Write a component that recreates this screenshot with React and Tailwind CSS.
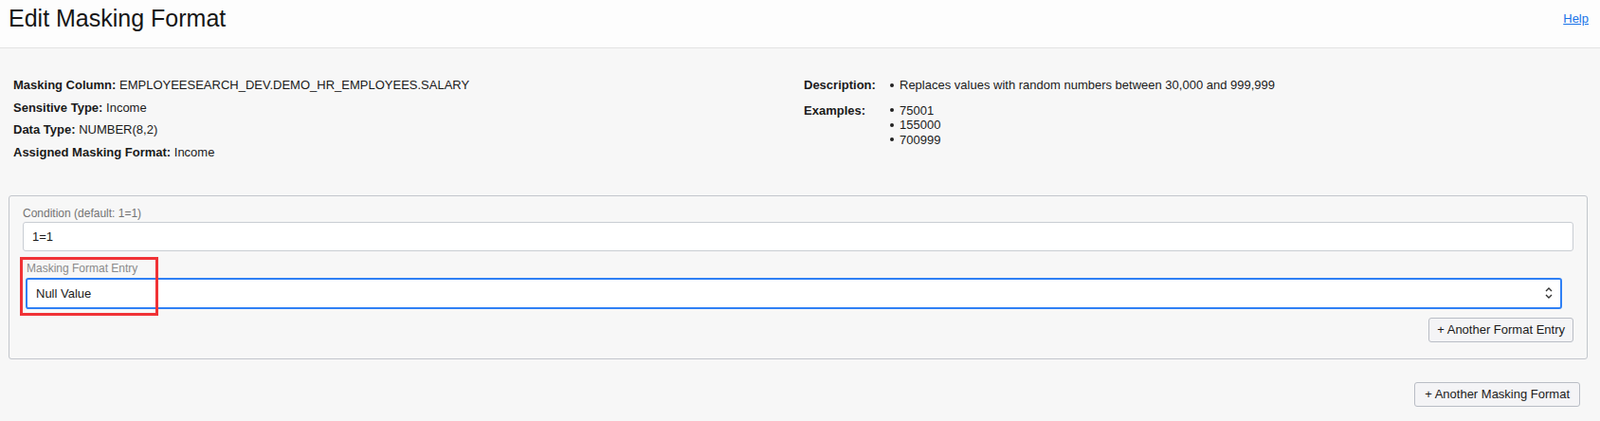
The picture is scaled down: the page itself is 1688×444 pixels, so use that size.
import { useState } from "react";

const font = { fontFamily: '"Liberation Sans", Arial, sans-serif' };

function InfoRow({ label, value }) {
  return (
    <div className="h-[23.5px] leading-[23.5px]">
      <span className="font-bold">{label}:</span> {value}
    </div>
  );
}

function Bullet({ children }) {
  return (
    <li className="flex items-center">
      <span className="mr-[6px] inline-block h-[4px] w-[4px] rounded-full bg-[#222]" />
      {children}
    </li>
  );
}

function SelectArrows() {
  return (
    <svg width="10" height="16" viewBox="0 0 10 16" className="text-[#333]">
      <path d="M2 6 L5 3 L8 6" fill="none" stroke="currentColor" strokeWidth="1.4" />
      <path d="M2 10 L5 13 L8 10" fill="none" stroke="currentColor" strokeWidth="1.4" />
    </svg>
  );
}

export default function App() {
  const [condition, setCondition] = useState("1=1");
  const [entry, setEntry] = useState("Null Value");

  return (
    <div className="min-h-[444px] bg-[#f7f7f7] text-[13px] text-[#1a1a1a]" style={font}>
      <div className="flex h-[51px] items-start justify-between border-b border-[#e3e3e3] bg-[#fdfdfd] pl-[9px] pr-[12px]">
        <h1 className="mt-[4px] text-[25px] leading-[30px] text-[#161616]">Edit Masking Format</h1>
        <a href="#" className="mt-[10px] text-[13px] text-[#1a73e8] underline">
          Help
        </a>
      </div>

      <div className="grid grid-cols-2 gap-[4px] px-[14px] pt-[27px]">
        <div>
          <InfoRow label="Masking Column" value="EMPLOYEESEARCH_DEV.DEMO_HR_EMPLOYEES.SALARY" />
          <InfoRow label="Sensitive Type" value="Income" />
          <InfoRow label="Data Type" value="NUMBER(8,2)" />
          <InfoRow label="Assigned Masking Format" value="Income" />
        </div>
        <div className="pl-[2px]">
          <div className="flex h-[23.5px] items-center">
            <span className="w-[91px] font-bold">Description:</span>
            <ul>
              <Bullet>Replaces values with random numbers between 30,000 and 999,999</Bullet>
            </ul>
          </div>
          <div className="mt-[7px] flex">
            <span className="w-[91px] font-bold leading-[15px]">Examples:</span>
            <ul className="leading-[15.5px]">
              <Bullet>75001</Bullet>
              <Bullet>155000</Bullet>
              <Bullet>700999</Bullet>
            </ul>
          </div>
        </div>
      </div>

      <div className="relative ml-[9px] mr-[13px] mt-[34px] rounded-[3px] border border-[#c2c6cc] px-[14px] pb-[17px] pt-[11px]">
        <label className="block text-[12px] leading-[15px] text-[#737373]">Condition (default: 1=1)</label>
        <input
          type="text"
          value={condition}
          onChange={(e) => setCondition(e.target.value)}
          className="mt-[1px] block h-[31px] w-full rounded-[3px] border border-[#c9cdd3] bg-white px-[9px] text-[13px] text-[#1a1a1a] outline-none"
        />

        <div className="ml-[3px] mr-[12px] mt-[11px]">
          <label className="ml-[1px] block text-[12px] leading-[15px] text-[#8a8a8a]">Masking Format Entry</label>
          <div className="relative mt-[2px]">
            <select
              value={entry}
              onChange={(e) => setEntry(e.target.value)}
              className="block h-[33px] w-full appearance-none rounded-[3px] border-2 border-[#2f80f5] bg-white pl-[9px] text-[13px] text-[#1a1a1a] outline-none"
            >
              <option>Null Value</option>
              <option>Random Numbers</option>
              <option>Fixed String</option>
            </select>
            <span className="pointer-events-none absolute right-[9px] top-[8px]">
              <SelectArrows />
            </span>
          </div>
        </div>

        <div className="mt-[9px] flex justify-end">
          <button className="h-[26px] rounded-[3px] border border-[#b9bdc5] bg-[#f4f4f6] px-[8px] text-[13px] text-[#1a1a1a]">
            + Another Format Entry
          </button>
        </div>

        <div className="pointer-events-none absolute left-[11px] top-[64px] h-[62px] w-[146px] border-[3px] border-[#f03236]" />
      </div>

      <div className="mr-[21px] mt-[24px] flex justify-end">
        <button className="h-[26px] rounded-[3px] border border-[#b9bdc5] bg-[#f4f4f6] px-[10px] text-[13px] text-[#1a1a1a]">
          + Another Masking Format
        </button>
      </div>
    </div>
  );
}
